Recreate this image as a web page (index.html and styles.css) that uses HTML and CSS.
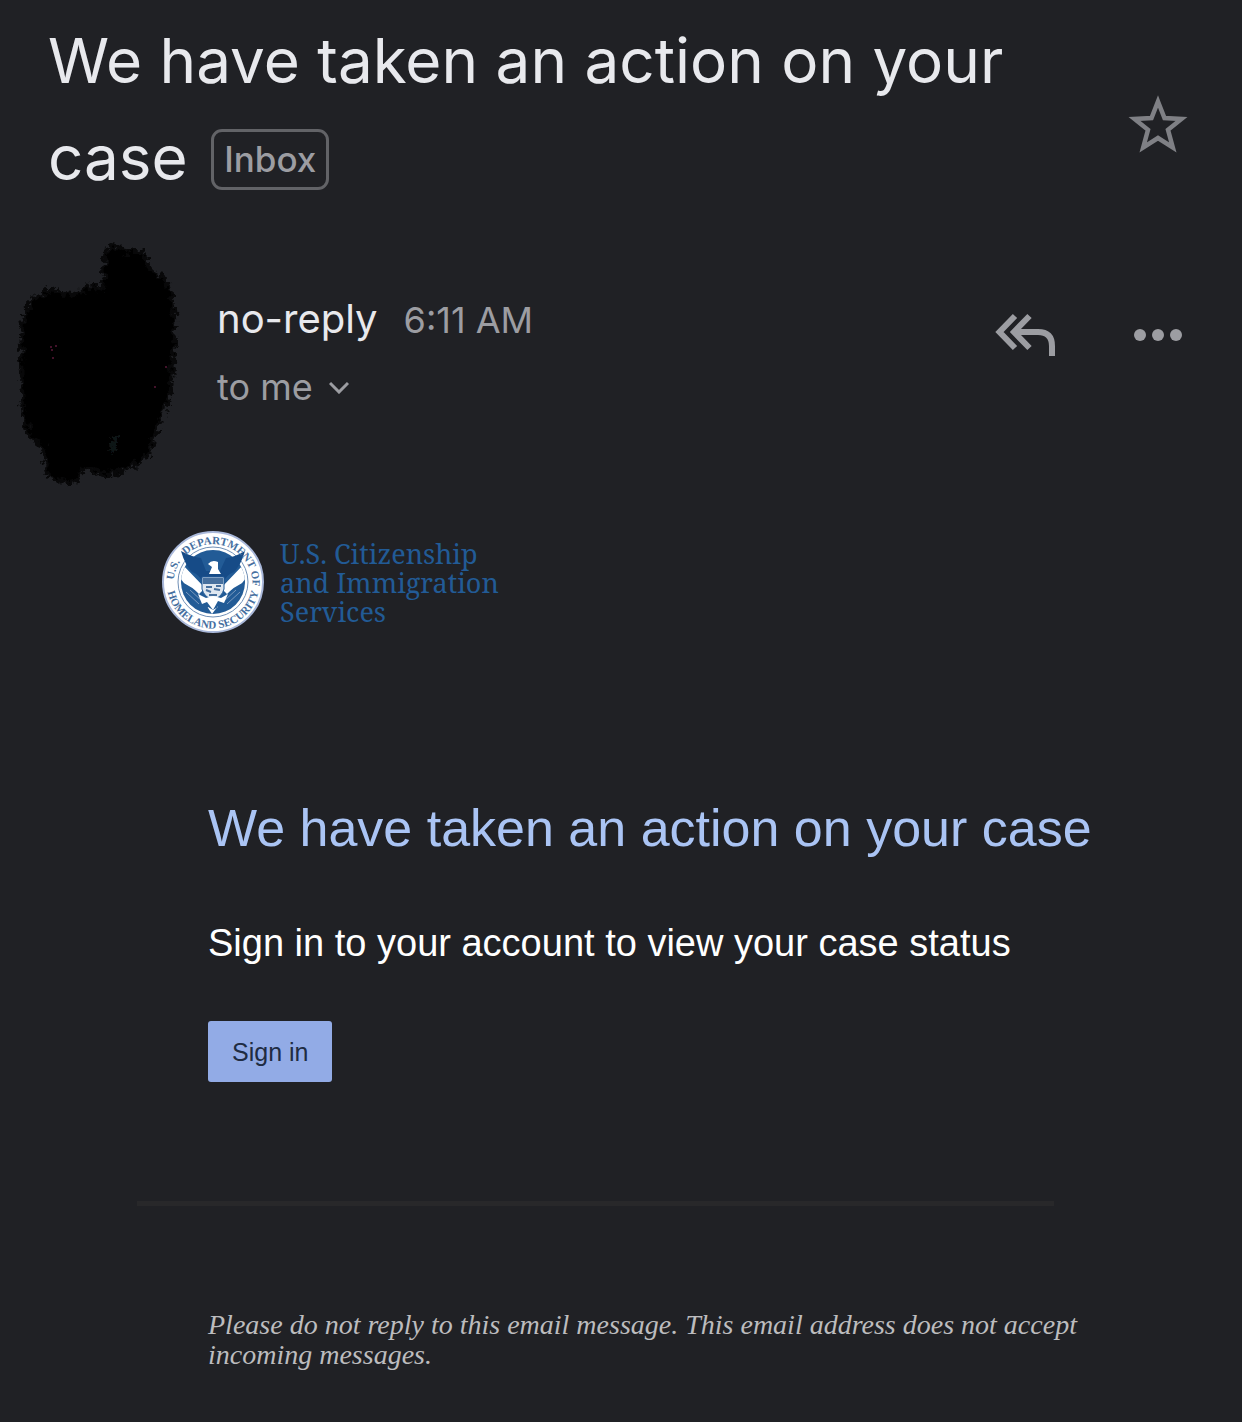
FILE: index.html
```
<!DOCTYPE html>
<html lang="en">
<head>
    <meta charset="UTF-8">
    <meta name="viewport" content="width=device-width, initial-scale=1.0">
    <title>We have taken an action on your case</title>
    <link rel="stylesheet" href="styles.css">
</head>
<body>
    <header class="subject">
        <div class="subject-line">
            <h1 class="subject-text">We have taken an action on your case</h1>
            <button type="button" class="label">Inbox</button>
        </div>
        <button type="button" class="icon-button star" aria-label="Star">
            <svg width="60" height="60" viewBox="0 0 60 60" fill="none" stroke="#7f8085" stroke-width="4.500">
                <path d="M30 6.500 36.500 23 53.500 24 40 34.800 44.800 52.500 30 43 15.200 52.500 20 34.800 6.500 24 23.500 23Z"/>
            </svg>
        </button>
    </header>

    <section class="sender">
        <svg class="avatar" width="164" height="248" viewBox="0 0 164 248" aria-hidden="true">
            <defs>
                <filter id="rough" x="-10%" y="-10%" width="120%" height="120%">
                    <feTurbulence type="fractalNoise" baseFrequency="0.16" numOctaves="3" seed="4"/>
                    <feDisplacementMap in="SourceGraphic" scale="14" xChannelSelector="R" yChannelSelector="G"/>
                </filter>
                <path id="blob" d="M90 10 101 8 112 12 124 12 130 27 144 37 152 52 156 80 154 110 153 146 144 172 135 194 130 212 113 222 104 229 86 230 64 224 60 237 48 238 33 234 28 204 13 192 8 168 6 120 8 78 17 59 35 50 58 56 72 46 87 49Z"/>
            </defs>
            <g filter="url(#rough)">
                <use href="#blob" fill="#000"/>
                <use href="#blob" fill="none" stroke="#000" stroke-opacity="0.75" stroke-width="9" stroke-linecap="round" stroke-dasharray="0 7"/>
                <path d="M90 210q12 0 11-14q-3-4-8 0q6 6-3 14" fill="#111214"/>
            </g>
            <g fill="#5a1838">
                <circle cx="34" cy="105" r="1"/>
                <circle cx="39" cy="104" r="1"/>
                <circle cx="35" cy="108" r="1"/>
                <circle cx="36" cy="116" r="1"/>
                <circle cx="149" cy="125" r="1"/>
                <circle cx="138" cy="145" r="1"/>
            </g>
        </svg>
        <div class="sender-info">
            <p class="sender-line">
                <span class="sender-name">no-reply</span>
                <time class="sender-time">6:11 AM</time>
            </p>
            <button type="button" class="recipients">to me
                <svg width="20" height="14" viewBox="0 0 20 14" fill="none" stroke="currentColor" stroke-width="3"><path d="M1 3 10 12 19 3"/></svg>
            </button>
        </div>
        <div class="sender-actions">
            <button type="button" class="icon-button" aria-label="Reply all">
                <svg width="62" height="44" viewBox="0 0 62 44" fill="none" stroke="#9c9da2" stroke-width="6">
                    <path d="M20 3 4.500 19 20 35M34.500 3 19 19 34.500 35M19 19H43Q57 19 57 33V43"/>
                </svg>
            </button>
            <button type="button" class="icon-button" aria-label="More">
                <svg width="50" height="14" viewBox="0 0 50 14" fill="#9c9da2"><circle cx="7" cy="7" r="6"/><circle cx="25" cy="7" r="6"/><circle cx="43" cy="7" r="6"/></svg>
            </button>
        </div>
    </section>

    <main class="message">
        <div class="logo">
            <svg width="104" height="104" viewBox="0 0 104 104" role="img" aria-label="U.S. Department of Homeland Security seal">
                <defs>
                    <path id="arc-top" d="M13 60A39.500 39.500 0 1 1 91 60"/>
                    <path id="arc-bottom" d="M5.500 52A46.500 46.500 0 0 0 98.500 52"/>
                    <clipPath id="disc"><circle cx="52" cy="52" r="32"/></clipPath>
                </defs>
                <circle cx="52" cy="52" r="50" fill="#fff" stroke="#a9b8da" stroke-width="2"/>
                <circle cx="52" cy="52" r="35" fill="none" stroke="#6f8fb6" stroke-width="1"/>
                <circle cx="52" cy="52" r="32" fill="#225b96"/>
                <g clip-path="url(#disc)">
                    <path d="M19 32 44 58 38 64 51 84 66 64 60 58 85 32 88 44 74 62 65 72 52 80 39 72 30 62 16 44Z" fill="#fff"/>
                    <path d="M20 52Q31 56 40 66L48 76 43 81Q26 74 20 52ZM84 52Q73 56 64 66L56 76 61 81Q78 74 84 52Z" fill="#225b96"/>
                    <path d="M25 62 38 74M29 60 41 71M79 62 66 74M75 60 63 71" stroke="#7898bd"/>
                </g>
                <path d="M20 21Q31 27 40 28L45 41H59L65 28Q74 27 84 21Q80 35 73 42Q66 44 61 54H43Q38 44 31 42Q24 35 20 21Z" fill="#164b87"/>
                <path d="M47 34Q51 29 57 32L57 39 60 44H48L51 37Z" fill="#fff"/>
                <path d="M41 47H63V59Q61 67 52 70Q43 67 41 59Z" fill="#dfe7f0" stroke="#225b96"/>
                <path d="M42 48H62V54H42Z" fill="#47709e"/>
                <path d="M45 57h6m4-1h5M45 60l5 2m3-3 6 1M48 65h8" stroke="#47709e" stroke-width="2"/>
                <path d="M37 64 45 68 52 66 60 68 67 64 63 73 57 71 52 80 46 72 41 74Z" fill="#fff"/>
                <g class="seal-text">
                    <text><textPath href="#arc-top" startOffset="10">U.S.</textPath></text>
                    <text><textPath href="#arc-top" startOffset="38">DEPARTMENT OF</textPath></text>
                    <text text-anchor="middle"><textPath href="#arc-bottom" startOffset="50%">HOMELAND SECURITY</textPath></text>
                </g>
            </svg>
            <p class="logo-text">U.S. Citizenship<br>and Immigration<br>Services</p>
        </div>

        <div class="content">
            <h2 class="heading">We have taken an action on your case</h2>
            <p class="text">Sign in to your account to view your case status</p>
            <a class="sign-in" href="#">Sign in</a>
        </div>

        <hr class="divider">

        <p class="notice">Please do not reply to this email message. This email address does not accept incoming messages.</p>
    </main>
</body>
</html>
```
FILE: styles.css
```
:root {
    --background: #202125;
    --text: #e8e9ed;
    --muted: #9c9da2;
    --link: #aac4f4;
    --button: #92abe6;
    --logo: #225b96;
}

* {
    margin: 0;
    padding: 0;
    box-sizing: border-box;
}

body {
    background-color: var(--background);
    color: var(--text);
    font-family: Inter, sans-serif;
}

button {
    background: none;
    border: none;
    color: inherit;
    font: inherit;
    cursor: pointer;
}

svg {
    display: block;
}

.subject {
    display: flex;
    align-items: center;
    justify-content: space-between;
    gap: 48px;
    padding: 12px 54px 0 48px;
}

.subject-line {
    max-width: 1000px;
    font-size: 62px;
    line-height: 97px;
}

.subject-text {
    display: inline;
    font-size: 62px;
    font-weight: 400;
}

.label {
    height: 61px;
    margin-left: 6px;
    padding: 0 10px;
    border: 3px solid #626367;
    border-radius: 11px;
    color: var(--muted);
    font-size: 35px;
    font-weight: 500;
    line-height: 54px;
    vertical-align: 8px;
}

.star {
    padding-top: 32px;
}

.sender {
    display: flex;
    align-items: flex-start;
    padding: 36px 59px 0 17px;
}

.sender-info {
    flex: 1;
    padding: 46px 0 0 36px;
}

.sender-line {
    display: flex;
    align-items: baseline;
    gap: 26px;
    line-height: 62px;
}

.sender-name {
    font-size: 40px;
}

.sender-time,
.recipients {
    color: var(--muted);
    font-size: 36px;
}

.recipients {
    display: flex;
    align-items: center;
    gap: 16px;
    line-height: 72px;
}

.sender-actions {
    display: flex;
    align-items: center;
    gap: 76px;
    padding-top: 71px;
}

.message {
    padding: 40px 137px 48px;
    font-family: "Liberation Sans", Arial, sans-serif;
}

.logo {
    display: flex;
    align-items: center;
    gap: 15px;
    padding-left: 24px;
}

.seal-text {
    fill: #466f9f;
    font-family: "Liberation Serif", serif;
    font-size: 11px;
    font-weight: 700;
}

.logo-text {
    color: var(--logo);
    font-family: "Noto Serif", "Liberation Serif", serif;
    font-size: 27px;
    line-height: 29px;
}

.content {
    padding: 158px 0 0 71px;
}

.heading {
    color: var(--link);
    font-size: 52px;
    font-weight: 400;
    line-height: 72px;
    white-space: nowrap;
}

.text {
    margin-top: 53px;
    color: #fff;
    font-size: 38px;
    line-height: 52px;
}

.sign-in {
    display: inline-block;
    margin-top: 52px;
    padding: 2px 24px 0;
    border-radius: 3px;
    background-color: var(--button);
    color: #202c42;
    font-size: 25px;
    line-height: 59px;
    text-decoration: none;
}

.divider {
    height: 5px;
    margin: 119px 51px 0 0;
    border: none;
    background-color: #28282a;
}

.notice {
    padding: 104px 0 0 71px;
    color: #bcbcbe;
    font-family: Georgia, "Liberation Serif", serif;
    font-size: 28px;
    font-style: italic;
    line-height: 30px;
}
```
